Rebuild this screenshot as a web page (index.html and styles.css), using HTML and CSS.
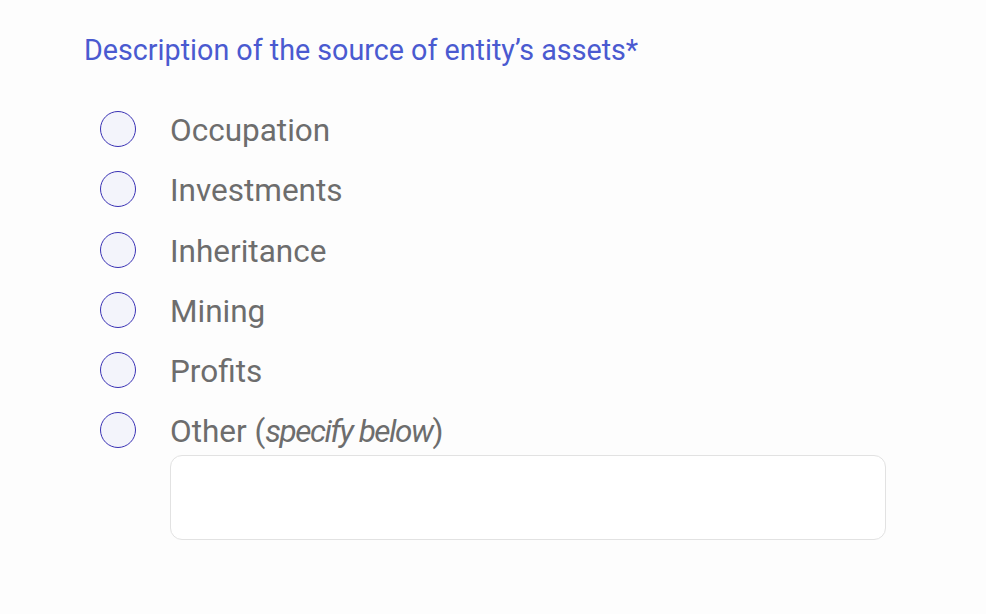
FILE: index.html
```html
<!DOCTYPE html>
<html lang="en">
<head>
<meta charset="utf-8">
<title>Source of assets</title>
<link rel="stylesheet" href="styles.css">
</head>
<body>
<form class="field">
  <h2 class="field-title">Description of the source of entity’s assets*</h2>
  <div class="options">
    <label class="option"><span class="radio"></span><span class="option-label">Occupation</span></label>
    <label class="option"><span class="radio"></span><span class="option-label">Investments</span></label>
    <label class="option"><span class="radio"></span><span class="option-label">Inheritance</span></label>
    <label class="option"><span class="radio"></span><span class="option-label">Mining</span></label>
    <label class="option"><span class="radio"></span><span class="option-label">Profits</span></label>
    <label class="option"><span class="radio"></span><span class="option-label">Other (<em>specify below</em>)</span></label>
  </div>
  <div class="other-box"></div>
</form>
</body>
</html>
```

FILE: styles.css
```css
html, body {
  margin: 0;
  padding: 0;
  background: #fdfdfd;
}

body {
  font-family: Roboto, "Liberation Sans", sans-serif;
  width: 986px;
  height: 614px;
  overflow: hidden;
}

.field {
  padding: 32px 0 0 84px;
  display: flex;
  flex-direction: column;
}

.field-title {
  margin: 0;
  font-size: 28.7px;
  line-height: 36px;
  font-weight: 400;
  color: #4a5ad0;
}

.options {
  margin-top: 43px;
  margin-left: 16px;
  display: flex;
  flex-direction: column;
  gap: 20.26px;
}

.option {
  display: flex;
  align-items: center;
  height: 40px;
  gap: 34px;
}

.radio {
  width: 36px;
  height: 36px;
  box-sizing: border-box;
  border: 1.8px solid #3a32b4;
  border-radius: 50%;
  background: #f3f4fb;
  flex: none;
  margin-bottom: 4px;
}

.option-label {
  font-size: 31.5px;
  line-height: 40px;
  color: #6d6d6d;
}

.option-label em {
  font-style: italic;
  letter-spacing: -1.5px;
}

.other-box {
  margin: 3px 0 0 86px;
  width: 716px;
  height: 85px;
  box-sizing: border-box;
  border: 1.5px solid #e2e2e2;
  border-radius: 12px;
  background: #ffffff;
}
```
